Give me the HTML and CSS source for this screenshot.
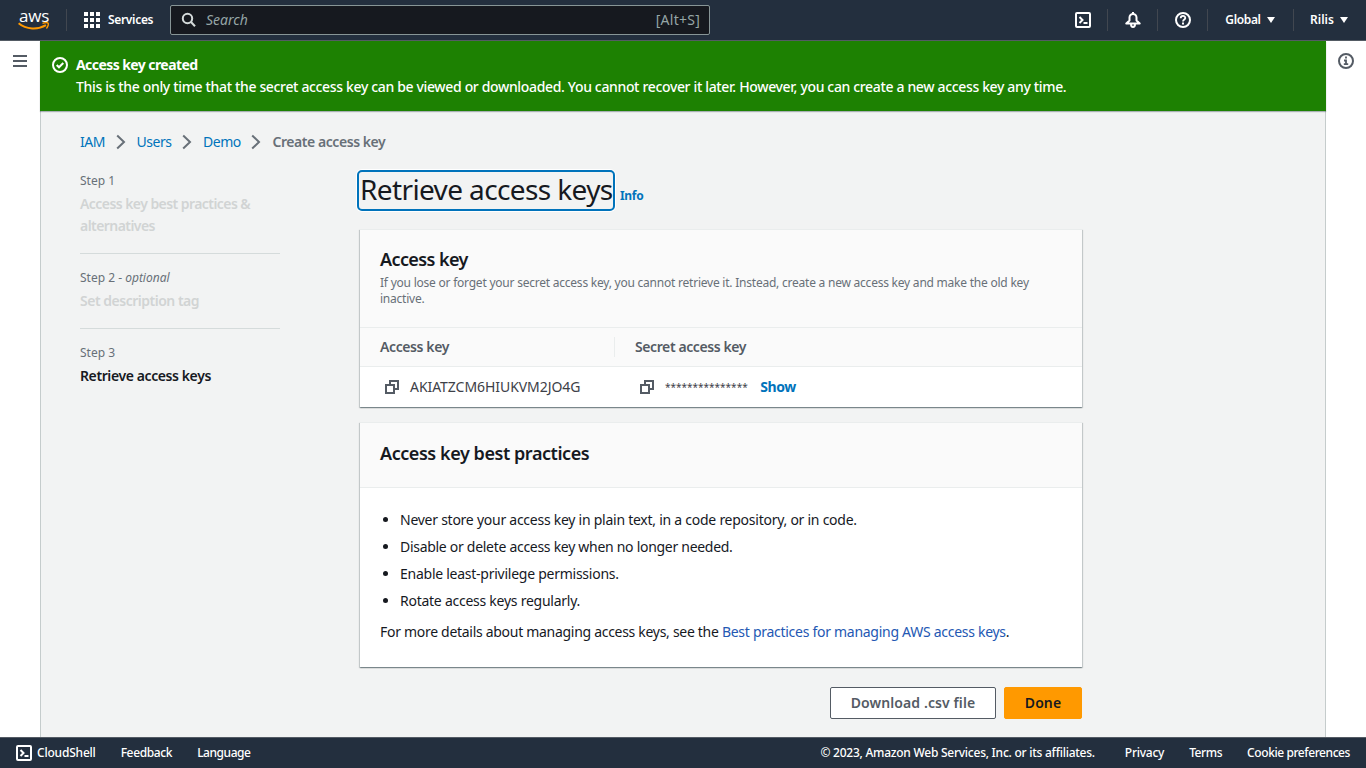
FILE: index.html
```html
<!DOCTYPE html>
<html lang="en">
<head>
<meta charset="utf-8">
<title>Retrieve access keys | IAM</title>
<link rel="stylesheet" href="styles.css">
</head>
<body>
<header class="topbar">
  <div class="logo"><span class="logo-text">aws</span>
    <svg class="logo-smile" width="32" height="9" viewBox="0 0 32 9" fill="none" stroke="#ff9900"><path d="M.6 1.2C8 7.6 20 8 28 3.2" stroke-width="2"/><path d="M24.500 1.300c2.500-.7 5-.8 5.600-.1.6.8-.1 3.500-1.700 5.200" stroke-width="1.400"/></svg>
  </div>
  <button class="services"><svg width="16" height="16" viewBox="0 0 16 16" fill="#fff"><path d="M0 0h4v4H0zM6 0h4v4H6zM12 0h4v4h-4zM0 6h4v4H0zM6 6h4v4H6zM12 6h4v4h-4zM0 12h4v4H0zM6 12h4v4H6zM12 12h4v4h-4z"/></svg><span class="t-services">Services</span></button>
  <div class="search">
    <svg width="16" height="16" viewBox="0 0 16 16" fill="none" stroke="#d5dbdb" stroke-width="2"><circle cx="6.500" cy="6.500" r="4.700"/><path d="M10 10l4 4.200"/></svg>
    <span class="search-hint">Search</span><span class="search-key">[Alt+S]</span>
  </div>
  <nav class="tools">
    <button class="tool"><svg width="16" height="16" viewBox="0 0 16 16" fill="none" stroke="#fff" stroke-width="2" stroke-linejoin="round"><rect x="1" y="1" width="14" height="14" rx="1"/><path d="M4.500 5l3 3-3 3M8.500 11h4" stroke-linejoin="miter"/></svg></button>
    <button class="tool"><svg width="16" height="16" viewBox="0 0 16 16" fill="none" stroke="#fff" stroke-width="2" stroke-linejoin="round"><path d="M1.300 11.500h13.400L11.500 8.500V5.500a3.500 3.500 0 0 0-7 0v3zM8 0v2M6 12c0 4 4 4 4 0"/></svg></button>
    <button class="tool"><svg width="16" height="16" viewBox="0 0 16 16" fill="none" stroke="#fff" stroke-width="2"><circle cx="8" cy="8" r="7"/><path d="M5.700 6.300C5.700 3.200 10.300 3.200 10.300 6c0 1.500-2.300 1.600-2.300 3.500" stroke-width="1.800"/><path d="M8 10.600v1.800"/></svg></button>
    <button class="tool region"><span class="t-global">Global</span><i class="caret"></i></button>
    <button class="tool account"><span class="t-rilis">Rilis</span><i class="caret"></i></button>
  </nav>
</header>
<div class="shell">
  <aside class="rail"><svg width="14" height="12" viewBox="0 0 14 12" fill="#545b64"><path d="M0 0h14v2H0zM0 5h14v2H0zM0 10h14v2H0z"/></svg></aside>
  <main class="main">
    <section class="flash">
      <svg width="16" height="16" viewBox="0 0 16 16" fill="none" stroke="#fff" stroke-width="2"><circle cx="8" cy="8" r="7"/><path d="M4.700 8l2.300 2.300 4.300-4.300"/></svg>
      <div><div class="flash-title"><span class="t-created">Access key created</span></div><div class="flash-text"><span class="t-flash">This is the only time that the secret access key can be viewed or downloaded. You cannot recover it later. However, you can create a new access key any time.</span></div></div>
    </section>
    <nav class="crumbs">
      <a class="t-iam">IAM</a><svg class="chev" width="10" height="16" viewBox="0 0 10 16"><path d="M1.200 1.500L8 8l-6.800 6.500"/></svg>
      <a class="t-users">Users</a><svg class="chev" width="10" height="16" viewBox="0 0 10 16"><path d="M1.200 1.500L8 8l-6.800 6.500"/></svg>
      <a class="t-demo">Demo</a><svg class="chev" width="10" height="16" viewBox="0 0 10 16"><path d="M1.200 1.500L8 8l-6.800 6.500"/></svg>
      <b class="t-create">Create access key</b>
    </nav>
    <div class="wizard">
      <ol class="steps">
        <li class="step"><div class="step-no t-step">Step 1</div><div class="step-name t-s1">Access key best practices &amp;<br>alternatives</div></li>
        <li class="step"><div class="step-no t-step">Step 2 - <i>optional</i></div><div class="step-name t-s2">Set description tag</div></li>
        <li class="step current"><div class="step-no t-step">Step 3</div><div class="step-name t-s3">Retrieve access keys</div></li>
      </ol>
      <div class="content">
        <div class="title-row"><h1 class="title"><span class="t-title">Retrieve access keys</span></h1><a class="info">Info</a></div>
        <section class="card">
          <div class="card-head keys-head"><h2 class="t-h2a">Access key</h2><p class="desc">If you lose or forget your secret access key, you cannot retrieve it. Instead, create a new access key and make the old key<br>inactive.</p></div>
          <div class="row row-head"><div class="cell first"><span class="t-th1">Access key</span></div><div class="cell"><span class="t-th2">Secret access key</span></div></div>
          <div class="row row-body">
            <div class="cell first"><svg class="copy" width="14" height="14" viewBox="0 0 14 14"><path d="M1 5h8v8H1zM5 5V1h8v8H9"/></svg><span class="t-key">AKIATZCM6HIUKVM2JO4G</span></div>
            <div class="cell"><svg class="copy" width="14" height="14" viewBox="0 0 14 14"><path d="M1 5h8v8H1zM5 5V1h8v8H9"/></svg><span class="t-stars">***************</span><a class="show">Show</a></div>
          </div>
        </section>
        <section class="card second">
          <div class="card-head"><h2 class="t-h2b">Access key best practices</h2></div>
          <div class="card-body">
            <ul class="tips"><li class="t-l1">Never store your access key in plain text, in a code repository, or in code.</li><li class="t-l2">Disable or delete access key when no longer needed.</li><li class="t-l3">Enable least-privilege permissions.</li><li class="t-l4">Rotate access keys regularly.</li></ul>
            <p class="more"><span class="t-more">For more details about managing access keys, see the </span><a class="t-best">Best practices for managing AWS access keys</a>.</p>
          </div>
        </section>
        <div class="actions"><button class="btn"><span class="t-dl">Download .csv file</span></button><button class="btn primary"><span class="t-done">Done</span></button></div>
      </div>
    </div>
  </main>
  <aside class="rail right"><svg width="16" height="16" viewBox="0 0 16 16" fill="none" stroke="#545b64" stroke-width="2"><circle cx="8" cy="8" r="7"/><path d="M8 3.500v2M6 7.500h2V11M5.800 11.200h4.400" stroke-width="1.800"/></svg></aside>
</div>
<footer class="footer">
  <svg width="16" height="16" viewBox="0 0 16 16" fill="none" stroke="#fff" stroke-width="2" stroke-linejoin="round"><rect x="1" y="1" width="14" height="14" rx="1"/><path d="M4.500 5l3 3-3 3M8.500 11h4" stroke-linejoin="miter"/></svg>
  <a class="f-cloud">CloudShell</a><a class="f-feed">Feedback</a><a class="f-lang">Language</a>
  <span class="f-copy">© 2023, Amazon Web Services, Inc. or its affiliates.</span><a class="f-priv">Privacy</a><a class="f-terms">Terms</a><a class="f-cook">Cookie preferences</a>
</footer>
</body>
</html>
```
FILE: styles.css
```css
* { box-sizing: border-box; }
body { margin: 0; height: 768px; overflow: hidden; display: flex; flex-direction: column; font: 14px/22px "Noto Sans", "Open Sans", sans-serif; color: #16191f; background: #fff; }
h1, h2, p, ul, ol { margin: 0; padding: 0; }
button { font: inherit; color: inherit; border: 0; background: none; padding: 0; }
svg { display: block; flex: none; }
span, a { white-space: nowrap; }
.topbar { height: 41px; flex: none; display: flex; align-items: center; background: #232f3e; border-bottom: 1px solid #545b64; color: #fff; font-size: 12px; font-weight: 600; }
.logo { width: 67px; height: 22px; border-right: 1px solid #414750; padding-left: 18px; }
.logo-text { display: block; font: 500 17px/15px "Open Sans", sans-serif; padding-left: 1px; letter-spacing: -.2px; margin-top: -1px; }
.logo-smile { margin-top: -1px; }
.services { display: flex; align-items: center; gap: 8px; width: 103px; padding-left: 17px; letter-spacing: -.32px; }
.search { width: 540px; height: 30px; border: 1px solid #879596; border-radius: 2px; background: #16191f; color: #95a5a6; display: flex; align-items: center; padding: 0 9px 0 10px; font-size: 14px; font-weight: 400; }
.search-hint { font-style: italic; margin-left: 9px; }
.search-key { margin-left: auto; letter-spacing: .25px; }
.tools { display: flex; margin-left: auto; letter-spacing: -.3px; }
.tool { height: 22px; width: 50px; display: flex; align-items: center; justify-content: center; border-right: 1px solid #414750; }
.region { width: 86px; gap: 6px; padding-right: 1px; letter-spacing: -.35px; }
.account { width: 72px; gap: 6px; border: 0; padding-right: 2px; }
.caret { border: 4px solid transparent; border-top: 6px solid #fff; border-bottom: 0; }
.shell { flex: 1; display: flex; min-height: 0; }
.rail { width: 40px; padding: 14px 13px; }
.rail.right { padding: 12px; }
.main { width: 1286px; background: #f2f3f3; border: solid #c5cccc; border-width: 0 1px; }
.flash { height: 70px; margin: 0 -1px; padding: 13px 12px; display: flex; gap: 8px; background: #1d8102; color: #fff; box-shadow: 0 1px 1px rgba(0,28,36,.3); }
.flash svg { margin-top: 3px; }
.flash-title { font-weight: 700; letter-spacing: -.57px; }
.flash-text { font-weight: 500; letter-spacing: -.345px; }
.crumbs { display: flex; align-items: center; height: 22px; margin: 20px 0 0 39px; color: #687078; }
.crumbs a { color: #0073bb; }
.crumbs .t-iam { letter-spacing: -.5px; }
.crumbs .t-users { letter-spacing: -.5px; }
.crumbs .t-demo { letter-spacing: -.5px; }
.t-create { font-weight: 600; letter-spacing: -.44px; }
.chev { margin: 0 11px 0 10.7px; fill: none; stroke: #687078; stroke-width: 2; }
.wizard { display: flex; padding-left: 39px; }
.steps { width: 200px; margin-right: 80px; padding-top: 20px; list-style: none; }
.step { border-bottom: 1px solid #d5dbdb; padding-bottom: 16px; margin-bottom: 16px; }
.step.current { border: 0; }
.step-no { font-size: 12px; line-height: 16px; height: 20px; color: #687078; }
.step-name { color: #d1d4d4; font-weight: 600; letter-spacing: -.56px; }
.step .t-s2 { letter-spacing: -.49px; }
.current .step-name { color: #16191f; letter-spacing: -.4px; }
.content { width: 722px; padding-top: 18px; }
.title-row { display: flex; height: 40px; align-items: flex-start; }
.title { width: 258px; height: 41px; margin: -1px 0 0 -3px; padding: 1px; border: 2px solid #0073bb; border-radius: 5px; box-shadow: 0 0 0 1px #fff; font-size: 28px; line-height: 33px; font-weight: 400; letter-spacing: -.62px; }
.info { font-size: 12px; font-weight: 700; color: #0073bb; margin: 14px 0 0 5px; letter-spacing: -.3px; }
.card { margin-top: 18px; border-top: 1px solid #eaeded; background: #fff; box-shadow: 0 1px 1px rgba(0,28,36,.3), 1px 1px 1px rgba(0,28,36,.15), -1px 1px 1px rgba(0,28,36,.15); }
.card.second { margin-top: 15px; height: 245px; }
.card-head { height: 65px; padding: 19px 20px 0; background: #fafafa; border-bottom: 1px solid #eaeded; }
.keys-head { height: 98px; padding-top: 18px; }
h2 { font-size: 18px; line-height: 22px; font-weight: 600; }
.t-h2a { letter-spacing: -.6px; }
.t-h2b { letter-spacing: -.44px; }
.desc { font-size: 12px; line-height: 16px; color: #687078; margin-top: 5px; white-space: nowrap; letter-spacing: -.227px; }
.row { display: flex; height: 39px; align-items: center; }
.row-head { background: #fafafa; border-bottom: 1px solid #eaeded; font-weight: 600; color: #545b64; letter-spacing: -.4px; }
.row-body { height: 40px; }
.cell { display: flex; align-items: center; padding-left: 20px; }
.cell.first { width: 255px; }
.row-head .first { border-right: 1px solid #eaeded; height: 20px; }
.row-body .cell { padding-left: 25px; color: #3d4148; }
.copy { fill: none; stroke: #545b64; stroke-width: 2; margin-right: 11px; }
.t-key { letter-spacing: -.06px; }
.t-stars { font-size: 10px; line-height: 18px; }
.show { color: #0073bb; font-weight: 700; margin-left: 12.500px; letter-spacing: -.4px; }
.card-body { padding: 21px 20px; letter-spacing: -.255px; }
.tips { padding-left: 20px; }
.tips li { height: 27px; }
.tips .t-l2 { letter-spacing: -.29px; }
.more { margin-top: 4px; }
.t-more { letter-spacing: -.295px; }
.more a { color: #2458b3; letter-spacing: -.28px; }
.actions { display: flex; justify-content: flex-end; gap: 8px; margin-top: 20px; }
.btn { width: 166px; height: 32px; border: 1px solid #545b64; border-radius: 2px; background: #fff; color: #545b64; font-weight: 600; letter-spacing: .1px; }
.primary { width: 78px; background: #ff9900; border-color: #ff9900; color: #16191f; }
.footer { height: 31px; flex: none; display: flex; align-items: center; padding: 0 16px; background: #232f3e; border-top: 1px solid #545b64; color: #fff; font-size: 12px; font-weight: 500; }
.f-cloud { margin-left: 5px; letter-spacing: -.2px; }
.f-feed, .f-lang { margin-left: 25px; letter-spacing: -.37px; }
.f-lang { letter-spacing: -.45px; }
.f-copy { margin-left: auto; letter-spacing: -.25px; }
.f-priv { margin-left: 30px; letter-spacing: -.25px; }
.f-terms, .f-cook { margin-left: 25px; letter-spacing: -.42px; }
```
